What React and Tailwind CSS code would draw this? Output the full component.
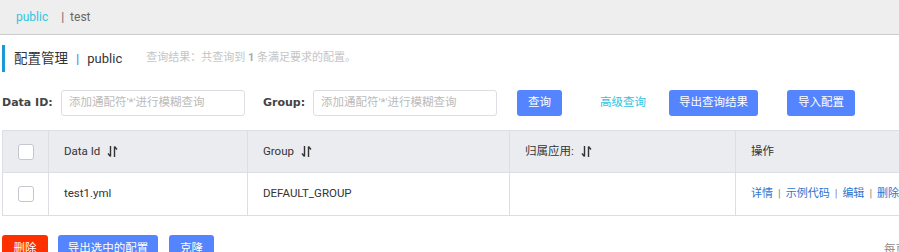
import React from "react";

const font = { fontFamily: 'Roboto, "Noto Sans CJK SC", sans-serif' };

function SortIcon() {
  return (
    <svg width="11" height="13" viewBox="0 0 11 13" className="ml-[7px] inline-block">
      <path d="M3.5 1 V11.5 M3.5 11.5 L1 8.5" stroke="#333" strokeWidth="1.4" fill="none" />
      <path d="M7.5 12 V1.5 M7.5 1.5 L10 4.5" stroke="#333" strokeWidth="1.4" fill="none" />
    </svg>
  );
}

function Checkbox() {
  return <div className="w-[16px] h-[16px] rounded-[3px] border border-[#c4c6cf] bg-white" />;
}

export default function App() {
  return (
    <div className="w-[899px] h-[252px] overflow-hidden bg-white text-[11.5px] text-[#333]" style={font}>
      {/* top namespace bar */}
      <div className="h-[35px] bg-[#eeeeee] border-b border-[#cccccc] flex items-center pl-[16px]">
        <span className="text-[12px] text-[#33c3e0]">public</span>
        <span className="ml-[13px] text-[12px] text-[#666] whitespace-pre">|  test</span>
      </div>

      {/* title */}
      <div className="flex items-center mt-[10px] ml-[2px] h-[27px] border-l-[3px] border-[#1a9ad6] pl-[9px]">
        <span className="text-[13.5px] text-[#333]">配置管理</span>
        <span className="text-[13.5px] text-[#5a7ed8] mx-[8px]">|</span>
        <span className="text-[13px] text-[#333]">public</span>
        <span className="ml-[24px] text-[11px] text-[#c5c5c5]">
          查询结果：共查询到 <b className="text-[#aaa]">1</b> 条满足要求的配置。
        </span>
      </div>

      {/* search row */}
      <div className="flex items-center mt-[18px] ml-[2px] h-[26px]">
        <span className="font-bold text-[#444] w-[59px]" style={{ fontFamily: '"DejaVu Sans", sans-serif', fontSize: "11px" }}>Data ID:</span>
        <div className="w-[184px] h-[26px] border border-[#dcdee3] rounded-[3px] flex items-center pl-[7px] text-[#bbb]">
          添加通配符'*'进行模糊查询
        </div>
        <span className="font-bold text-[#444] ml-[18px] w-[50px]" style={{ fontFamily: '"DejaVu Sans", sans-serif', fontSize: "11px" }}>Group:</span>
        <div className="w-[184px] h-[26px] border border-[#dcdee3] rounded-[3px] flex items-center pl-[7px] text-[#bbb]">
          添加通配符'*'进行模糊查询
        </div>
        <button className="ml-[20px] w-[45px] h-[26px] rounded-[3px] bg-[#5584ff] text-white">查询</button>
        <span className="ml-[38px] text-[#33c3e0]">高级查询</span>
        <button className="ml-[23px] w-[89px] h-[26px] rounded-[3px] bg-[#5584ff] text-white">导出查询结果</button>
        <button className="ml-[29px] w-[68px] h-[26px] rounded-[3px] bg-[#5584ff] text-white">导入配置</button>
      </div>

      {/* table */}
      <div className="mt-[14px] ml-[2px] w-[1100px] border-l border-[#dcdee3]">
        <div className="flex h-[43px] bg-[#ebecf0] border-t border-b border-[#dcdee3]">
          <div className="w-[46px] flex items-center justify-center border-r border-[#dcdee3]">
            <Checkbox />
          </div>
          <div className="w-[199px] flex items-center pl-[15px] border-r border-[#dcdee3]">
            Data Id <SortIcon />
          </div>
          <div className="w-[262px] flex items-center pl-[15px] border-r border-[#dcdee3]">
            Group <SortIcon />
          </div>
          <div className="w-[226px] flex items-center pl-[15px] border-r border-[#dcdee3]">
            归属应用: <SortIcon />
          </div>
          <div className="w-[300px] flex items-center pl-[15px]">操作</div>
        </div>
        <div className="flex h-[43px] border-b border-[#dcdee3]">
          <div className="w-[46px] flex items-center justify-center border-r border-[#dcdee3]">
            <Checkbox />
          </div>
          <div className="w-[199px] flex items-center pl-[15px] border-r border-[#dcdee3]">test1.yml</div>
          <div className="w-[262px] flex items-center pl-[15px] border-r border-[#dcdee3]">DEFAULT_GROUP</div>
          <div className="w-[226px] flex items-center pl-[15px] border-r border-[#dcdee3]"></div>
          <div className="w-[300px] flex items-center pl-[15px] text-[11px] text-[#2f74d0] whitespace-nowrap">
            详情<span className="mx-[5px] text-[#888]">|</span>示例代码<span className="mx-[5px] text-[#888]">|</span>编辑<span className="mx-[5px] text-[#888]">|</span>删除
          </div>
        </div>
      </div>

      {/* bottom buttons */}
      <div className="flex items-start mt-[19px] ml-[2px]">
        <button className="w-[46px] h-[28px] rounded-[3px] bg-[#ff3000] text-white">删除</button>
        <button className="ml-[10px] w-[100px] h-[28px] rounded-[3px] bg-[#5584ff] text-white">导出选中的配置</button>
        <button className="ml-[11px] w-[45px] h-[28px] rounded-[3px] bg-[#5584ff] text-white">克隆</button>
        <span className="ml-auto mr-[-8px] mt-[6px] text-[#888]">每页</span>
      </div>
    </div>
  );
}
